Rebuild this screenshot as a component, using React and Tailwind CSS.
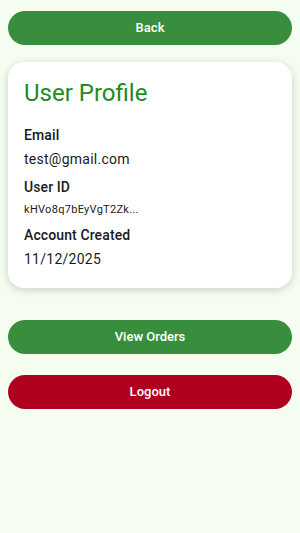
import React from 'react';

// Profile screen: back button, profile card, actions
function PillButton({ children, color, className = '' }) {
  return (
    <button
      className={`w-full h-[34px] rounded-full text-white text-[13px] font-['Roboto_Medium','Roboto',sans-serif] flex items-center justify-center ${color} ${className}`}
    >
      {children}
    </button>
  );
}

export default function App() {
  const user = {
    email: 'test@gmail.com',
    uid: 'kHVo8q7bEyVgT2Zk...',
    created: '11/12/2025',
  };

  const label = "text-[14px] leading-[20px] font-['Roboto_Medium','Roboto',sans-serif] tracking-[0.1px]";
  const value = 'text-[14px] leading-[20px] tracking-[0.25px]';

  return (
    <div className="min-h-screen bg-[#f5fdf1] px-2 pt-[11px] font-['Roboto',sans-serif]">
      <PillButton color="bg-[#388e3c]">Back</PillButton>

      <div className="mt-[17px] bg-white rounded-[16px] shadow-[0_2px_8px_rgba(0,0,0,0.18)] px-4 pt-[15px] h-[226px]">
        <h1 className="text-[24px] leading-[32px] text-[#228b22]">User Profile</h1>

        <div className="mt-[16px] text-[#1b1b1b]">
          <div className={label}>Email</div>
          <div className={`mt-[4px] ${value}`}>{user.email}</div>

          <div className={`mt-[8px] ${label}`}>User ID</div>
          <div className="mt-[5px] text-[11px] leading-[16px] tracking-[0.3px]">{user.uid}</div>

          <div className={`mt-[7px] ${label}`}>Account Created</div>
          <div className={`mt-[4px] ${value}`}>{user.created}</div>
        </div>
      </div>

      <PillButton color="bg-[#388e3c]" className="mt-[32px]">View Orders</PillButton>
      <PillButton color="bg-[#b00020]" className="mt-[21px]">Logout</PillButton>
    </div>
  );
}
